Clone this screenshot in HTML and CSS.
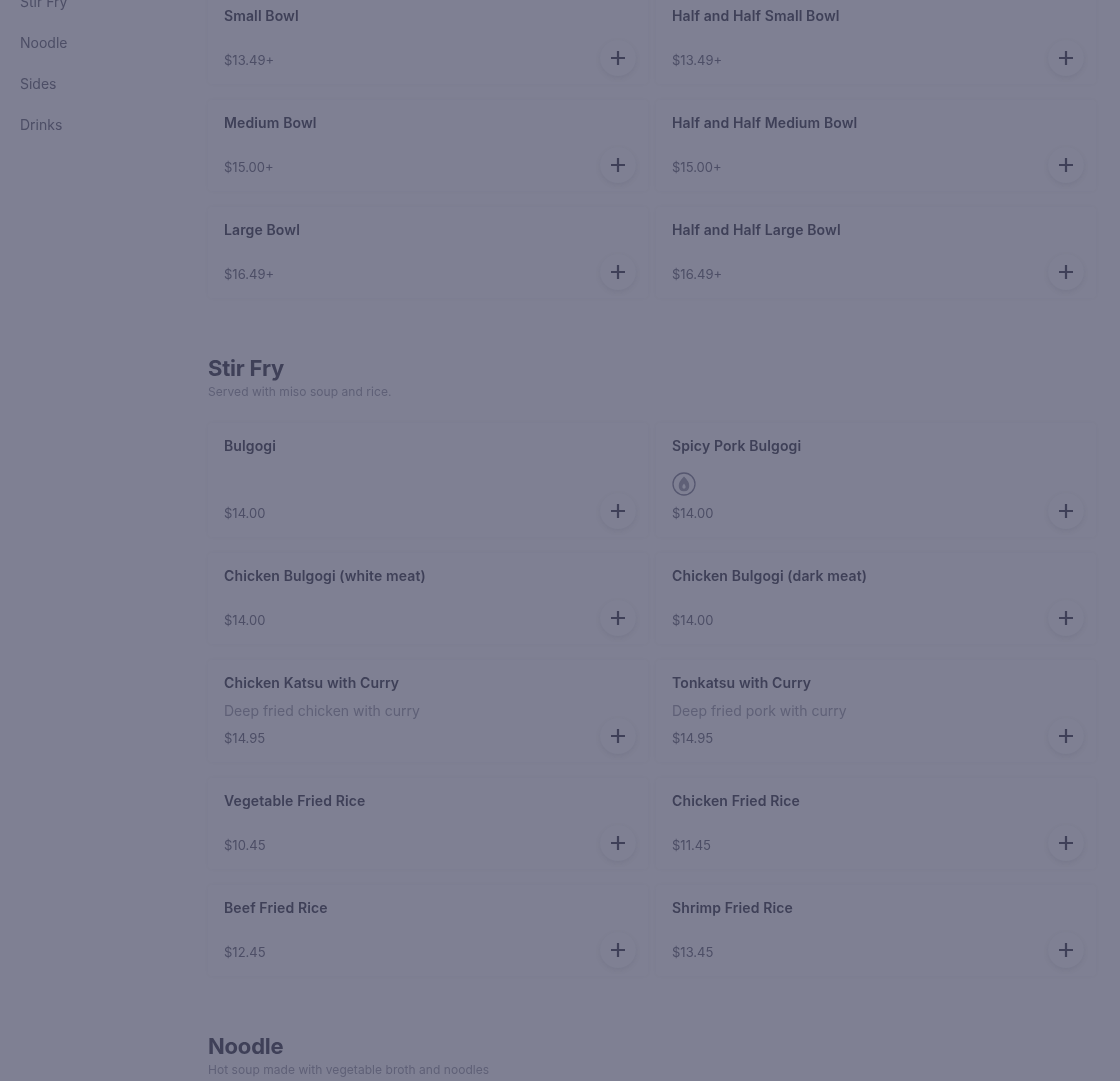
FILE: index.html
```html
<!DOCTYPE html>
<html lang="en">
<head>
    <meta charset="UTF-8">
    <meta name="viewport" content="width=device-width, initial-scale=1.0">
    <title>Menu</title>
    <link rel="stylesheet" href="styles.css">
</head>
<body>
    <div class="page">
        <nav class="side-nav">
            <a class="side-link">Stir Fry</a>
            <a class="side-link">Noodle</a>
            <a class="side-link">Sides</a>
            <a class="side-link">Drinks</a>
        </nav>
        <main class="menu">
            <section class="menu-section first-section">
                <div class="item-grid">
                    <div class="item-card"><div class="item-name">Small Bowl</div><div class="item-bottom"><span class="item-price">$13.49+</span><button class="add-btn"><svg viewBox="0 0 16 16"><path d="M8 1v14M1 8h14"/></svg></button></div></div>
                    <div class="item-card"><div class="item-name">Half and Half Small Bowl</div><div class="item-bottom"><span class="item-price">$13.49+</span><button class="add-btn"><svg viewBox="0 0 16 16"><path d="M8 1v14M1 8h14"/></svg></button></div></div>
                    <div class="item-card"><div class="item-name">Medium Bowl</div><div class="item-bottom"><span class="item-price">$15.00+</span><button class="add-btn"><svg viewBox="0 0 16 16"><path d="M8 1v14M1 8h14"/></svg></button></div></div>
                    <div class="item-card"><div class="item-name">Half and Half Medium Bowl</div><div class="item-bottom"><span class="item-price">$15.00+</span><button class="add-btn"><svg viewBox="0 0 16 16"><path d="M8 1v14M1 8h14"/></svg></button></div></div>
                    <div class="item-card"><div class="item-name">Large Bowl</div><div class="item-bottom"><span class="item-price">$16.49+</span><button class="add-btn"><svg viewBox="0 0 16 16"><path d="M8 1v14M1 8h14"/></svg></button></div></div>
                    <div class="item-card"><div class="item-name">Half and Half Large Bowl</div><div class="item-bottom"><span class="item-price">$16.49+</span><button class="add-btn"><svg viewBox="0 0 16 16"><path d="M8 1v14M1 8h14"/></svg></button></div></div>
                </div>
            </section>
            <section class="menu-section">
                <h2 class="section-title">Stir Fry</h2>
                <p class="section-note">Served with miso soup and rice.</p>
                <div class="item-grid">
                    <div class="item-card tall"><div class="item-name">Bulgogi</div><div class="item-bottom"><span class="item-price">$14.00</span><button class="add-btn"><svg viewBox="0 0 16 16"><path d="M8 1v14M1 8h14"/></svg></button></div></div>
                    <div class="item-card tall"><div class="item-name">Spicy Pork Bulgogi</div>
                        <svg class="spicy-icon" viewBox="0 0 24 24"><circle cx="12" cy="12" r="11"/><path class="flame" d="M12 5.500c2.600 2.500 4.600 5.200 4.600 8.400 0 2.800-2 4.600-4.600 4.600s-4.600-1.800-4.600-4.600c0-3.200 2-5.900 4.600-8.400z"/><path class="flame-inner" d="M12 11.500c1 1.200 1.600 2.300 1.600 3.500 0 1-.7 1.700-1.600 1.700s-1.600-.7-1.600-1.700c0-1.200.6-2.300 1.600-3.500z"/></svg>
                        <div class="item-bottom"><span class="item-price">$14.00</span><button class="add-btn"><svg viewBox="0 0 16 16"><path d="M8 1v14M1 8h14"/></svg></button></div></div>
                    <div class="item-card"><div class="item-name">Chicken Bulgogi (white meat)</div><div class="item-bottom"><span class="item-price">$14.00</span><button class="add-btn"><svg viewBox="0 0 16 16"><path d="M8 1v14M1 8h14"/></svg></button></div></div>
                    <div class="item-card"><div class="item-name">Chicken Bulgogi (dark meat)</div><div class="item-bottom"><span class="item-price">$14.00</span><button class="add-btn"><svg viewBox="0 0 16 16"><path d="M8 1v14M1 8h14"/></svg></button></div></div>
                    <div class="item-card mid"><div class="item-name">Chicken Katsu with Curry</div><div class="item-desc">Deep fried chicken with curry</div><div class="item-bottom"><span class="item-price">$14.95</span><button class="add-btn"><svg viewBox="0 0 16 16"><path d="M8 1v14M1 8h14"/></svg></button></div></div>
                    <div class="item-card mid"><div class="item-name">Tonkatsu with Curry</div><div class="item-desc">Deep fried pork with curry</div><div class="item-bottom"><span class="item-price">$14.95</span><button class="add-btn"><svg viewBox="0 0 16 16"><path d="M8 1v14M1 8h14"/></svg></button></div></div>
                    <div class="item-card"><div class="item-name">Vegetable Fried Rice</div><div class="item-bottom"><span class="item-price">$10.45</span><button class="add-btn"><svg viewBox="0 0 16 16"><path d="M8 1v14M1 8h14"/></svg></button></div></div>
                    <div class="item-card"><div class="item-name">Chicken Fried Rice</div><div class="item-bottom"><span class="item-price">$11.45</span><button class="add-btn"><svg viewBox="0 0 16 16"><path d="M8 1v14M1 8h14"/></svg></button></div></div>
                    <div class="item-card"><div class="item-name">Beef Fried Rice</div><div class="item-bottom"><span class="item-price">$12.45</span><button class="add-btn"><svg viewBox="0 0 16 16"><path d="M8 1v14M1 8h14"/></svg></button></div></div>
                    <div class="item-card"><div class="item-name">Shrimp Fried Rice</div><div class="item-bottom"><span class="item-price">$13.45</span><button class="add-btn"><svg viewBox="0 0 16 16"><path d="M8 1v14M1 8h14"/></svg></button></div></div>
                </div>
            </section>
            <section class="menu-section">
                <h2 class="section-title">Noodle</h2>
                <p class="section-note">Hot soup made with vegetable broth and noodles</p>
            </section>
        </main>
    </div>
</body>
</html>
```

FILE: styles.css
```css
html, body {
    margin: 0;
    height: 100%;
    overflow: hidden;
    background: #7f8093;
}
.page {
    display: flex;
    height: 1081px;
    overflow: hidden;
    font-family: "Inter", sans-serif;
    color: #3f4058;
    filter: blur(0.5px);
}
.side-nav {
    width: 208px;
    flex-shrink: 0;
    padding: 0 0 0 20px;
    box-sizing: border-box;
    margin-top: -8px;
    display: flex;
    flex-direction: column;
    gap: 21px;
}
.side-link {
    font-size: 14px;
    line-height: 20px;
    color: #4d4e66;
}
.menu {
    width: 888px;
    margin-top: -7px;
}
.menu-section {
    margin-bottom: 57px;
}
.section-title {
    font-size: 22px;
    line-height: 26px;
    font-weight: 700;
    letter-spacing: -0.2px;
    margin: 0;
    color: #3f4058;
}
.section-note {
    font-size: 12px;
    line-height: 16px;
    letter-spacing: 0.05px;
    margin: 3px 0 23px;
    color: #5f6077;
}
.item-grid {
    display: grid;
    grid-template-columns: 1fr 1fr;
    column-gap: 8px;
    row-gap: 16px;
}
.item-card {
    height: 91px;
    box-sizing: border-box;
    padding: 13px 8px 8px 16px;
    border-radius: 4px;
    box-shadow: 0 0 4px rgba(63, 64, 88, 0.03);
    display: flex;
    flex-direction: column;
}
.item-card.tall {
    height: 114px;
}
.item-card.mid {
    height: 102px;
}
.item-name {
    font-size: 14px;
    line-height: 20px;
    font-weight: 600;
    letter-spacing: 0.12px;
    color: #3f4058;
}
.item-desc {
    font-size: 14px;
    line-height: 20px;
    margin-top: 8px;
    margin-bottom: -3px;
    color: #5f6077;
}
.spicy-icon {
    width: 24px;
    height: 24px;
    margin-top: 16px;
    margin-bottom: -16px;
    fill: none;
    stroke: #565770;
    stroke-width: 1.3;
}
.spicy-icon .flame {
    fill: #5f6077;
    stroke: #5f6077;
}
.spicy-icon .flame-inner {
    fill: #7f8093;
    stroke: none;
}
.item-bottom {
    margin-top: auto;
    display: flex;
    justify-content: space-between;
    align-items: center;
    height: 36px;
}
.item-price {
    font-size: 13px;
    line-height: 20px;
    color: #4d4e66;
    margin-top: 4px;
}
.add-btn {
    width: 36px;
    height: 36px;
    padding: 0;
    border: none;
    border-radius: 50%;
    background: #7f8093;
    box-shadow: 0 2px 5px rgba(63, 64, 88, 0.12);
    display: flex;
    align-items: center;
    justify-content: center;
    margin-right: 4px;
}
.add-btn svg {
    width: 16px;
    height: 16px;
    fill: none;
    stroke: #3f4058;
    stroke-width: 2.2;
}
```
